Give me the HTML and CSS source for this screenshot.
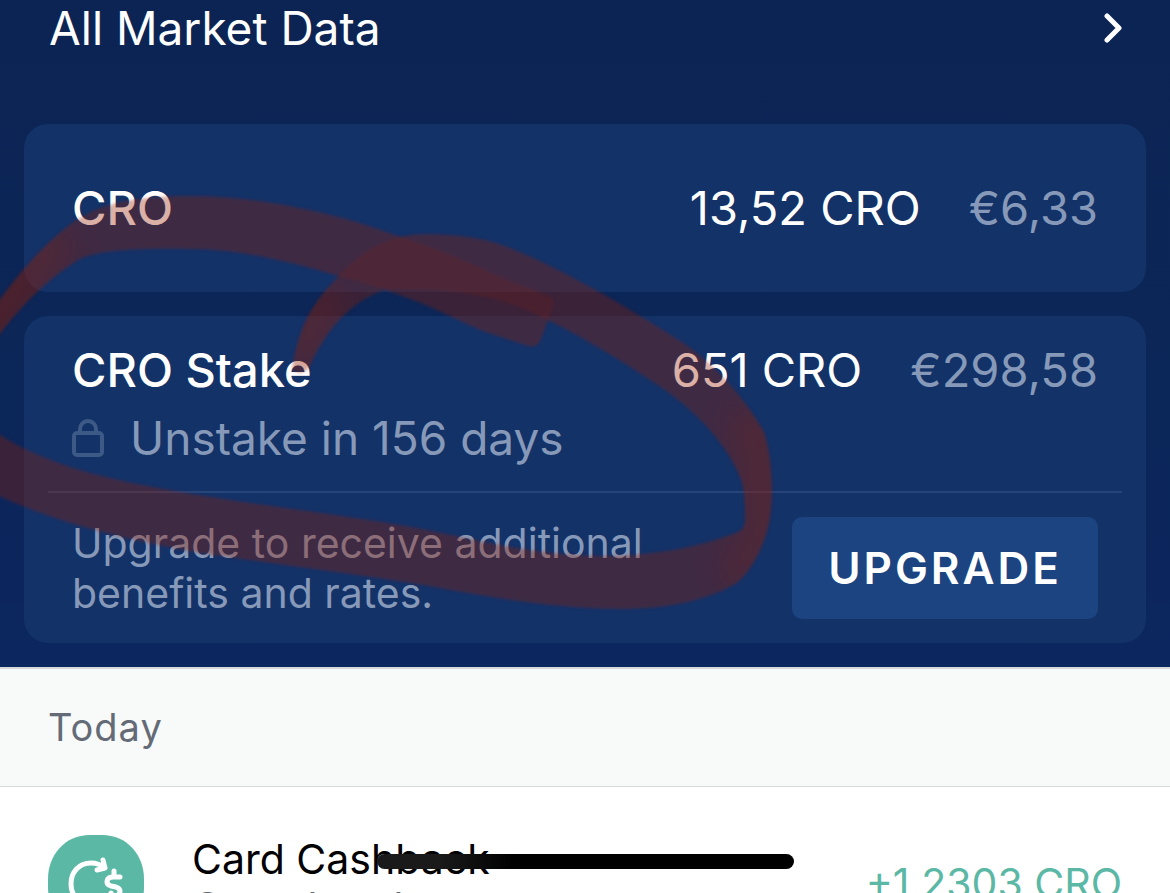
FILE: index.html
```html
<!DOCTYPE html>
<html lang="en">
<head>
  <meta charset="UTF-8">
  <meta name="viewport" content="width=device-width, initial-scale=1">
  <title>CRO Wallet</title>
  <link rel="stylesheet" href="styles.css">
</head>
<body>

<main class="screen">
  <section class="wallet">
    <a class="market-link" href="#market">
      <span>All Market Data</span>
      <svg class="chevron" viewBox="0 0 18 30" aria-hidden="true">
        <path d="M3 3L15 15L3 27"/>
      </svg>
    </a>

    <div class="card card-balance">
      <div class="row">
        <h2>CRO</h2>
        <span class="amount">13,52 CRO</span>
        <span class="fiat">€6,33</span>
      </div>
    </div>

    <div class="card card-stake">
      <div class="row">
        <h2>CRO Stake</h2>
        <span class="amount">651 CRO</span>
        <span class="fiat">€298,58</span>
      </div>
      <div class="lock-row">
        <svg class="lock" viewBox="0 0 32 38" aria-hidden="true">
          <rect x="2" y="14" width="28" height="22" rx="3"/>
          <path d="M8 14V10a8 8 0 0 1 16 0v4"/>
        </svg>
        <span>Unstake in 156 days</span>
      </div>
      <div class="upgrade">
        <p>Upgrade to receive additional<br>benefits and rates.</p>
        <button type="button">UPGRADE</button>
      </div>
    </div>

    <!-- highlighter circle around the stake -->
    <svg class="marker" viewBox="0 0 1170 667" aria-hidden="true">
      <defs>
        <filter id="soft"><feGaussianBlur stdDeviation="1.5"/></filter>
        <filter id="softer" x="-30%" y="-30%" width="160%" height="160%"><feGaussianBlur stdDeviation="14"/></filter>
        <path id="band" d="M552 298C530 288 515 283 500 277C465 260 430 246 395 235C340 214 260 196 190 196C140 196 100 201 68 226C38 250 18 275 -8 310V345C15 312 42 283 75 262C90 251 130 248 190 249C240 249 290 262 335 275C370 284 405 296 430 307L480 330L528 346C536 348 539 344 541 339L553 307C554 302 554 300 552 298Z"/>
        <path id="loop" d="M-10 428C15 446 45 460 90 473C180 497 300 508 400 525C470 537 520 554 600 556C660 556 705 545 738 532C746 529 745 521 745 510C744 495 744 486 740 477C725 440 690 405 650 380C610 353 570 330 535 314C495 294 440 287 384 290C345 304 322 338 311 364Q304 378 292 370C298 332 308 308 335 280C360 252 385 235 425 234C470 235 490 240 510 248C570 272 640 315 685 344C728 375 750 408 764 432C773 460 775 505 767 531C760 556 748 573 738 582C712 599 670 609 620 609C550 608 490 597 440 588C380 577 280 565 200 553C110 537 45 518 -10 492Z"/>
        <clipPath id="ink"><use href="#band"/><use href="#loop"/></clipPath>
        <clipPath id="bandClip"><use href="#band"/></clipPath>
      </defs>
      <g class="ink" filter="url(#soft)">
        <use href="#band"/>
        <use href="#loop"/>
      </g>
      <g class="ink-dark" filter="url(#soft)">
        <g clip-path="url(#bandClip)">
          <use href="#loop"/>
        </g>
      </g>
      <g class="ink-dark" filter="url(#soft)">
        <g clip-path="url(#ink)">
          <g filter="url(#softer)">
            <path d="M-40 290L40 225L80 240L-10 380Z"/>
            <path d="M280 370L300 300L330 280L345 306L318 360Z"/>
            <path d="M725 410L785 410V540L740 595L715 570L742 530L735 460Z"/>
          </g>
        </g>
      </g>
    </svg>
  </section>

  <h3 class="day">Today</h3>

  <section class="transaction">
    <svg class="coin" viewBox="0 0 96 96" aria-hidden="true">
      <path class="coin-bg" d="M42 0H54C79 0 96 20 96 44V52C96 78 78 96 54 96H42C18 96 0 78 0 52V44C0 20 17 0 42 0Z"/>
      <path class="coin-arrow" d="M57 33C52 29 48 28 43 28C31 28 23 37 23 49C23 61 32 70 44 70C53 70 60 65 63 58M55 25L57 33L49 35"/>
      <path class="coin-dollar" d="M66 36V42M72 42H65C58 42 57 49 63 51L68 52C74 54 73 61 66 61H59M66 61V67"/>
    </svg>
    <div class="details">
      <h4>Card Cashback</h4>
      <p>Completed</p>
    </div>
    <span class="earned">+1,2303 CRO</span>
    <span class="redaction"></span>
  </section>
</main>

</body>
</html>
```

FILE: styles.css
```css
* {
  box-sizing: border-box;
}
body {
  margin: 0;
  font-family: Inter, "Liberation Sans", sans-serif;
  font-size: 46px;
  background: #fff;
  color: #fff;
}
h2, h3, h4, p {
  margin: 0;
  font-weight: 400;
}
.screen {
  height: 100vh;
  overflow: hidden;
}
.wallet {
  position: relative;
  padding: 0 24px 24px;
  background: linear-gradient(#0c2454, #0b2657 50%, #0c265f);
}
.market-link {
  display: flex;
  align-items: center;
  justify-content: space-between;
  padding: 0 24px 0 25px;
  margin-bottom: 68px;
  line-height: 56px;
  color: #fff;
  text-decoration: none;
}
.chevron {
  width: 18px;
  height: 30px;
  fill: none;
  stroke: #fff;
  stroke-width: 5;
  stroke-linecap: round;
  stroke-linejoin: round;
}
.card {
  border-radius: 24px;
  background: #133268;
}
.card + .card {
  margin-top: 24px;
}
.card-balance {
  padding: 50px 0;
}
.card-stake {
  padding: 20px 0 24px;
}
.row {
  display: flex;
  padding: 0 48px;
  font-size: 47px;
  line-height: 68px;
}
.row h2 {
  flex: 1;
  font-size: 47px;
  font-weight: 500;
}
.fiat {
  margin-left: 48px;
  color: #8799b8;
}
.lock-row {
  display: flex;
  align-items: center;
  gap: 26px;
  padding: 0 48px;
  line-height: 68px;
  color: #8799b8;
}
.lock {
  width: 32px;
  height: 38px;
  fill: none;
  stroke: #3d5986;
  stroke-width: 4;
}
.upgrade {
  display: flex;
  align-items: center;
  justify-content: space-between;
  margin: 19px 24px 0;
  padding: 24px 24px 0;
  border-top: 2px solid #28457a;
}
.upgrade p {
  font-size: 41px;
  line-height: 50px;
  color: #8799b8;
}
.upgrade button {
  height: 102px;
  padding: 0 36px;
  border: 0;
  border-radius: 10px;
  background: #1c4481;
  color: #fff;
  font-family: inherit;
  font-size: 44px;
  font-weight: 600;
  letter-spacing: 3px;
  cursor: pointer;
}
.marker {
  position: absolute;
  top: 0;
  left: 0;
  width: 100%;
  height: 100%;
  pointer-events: none;
}
.ink {
  fill: #941a00;
  opacity: 0.34;
}
.ink-dark {
  fill: #941a00;
  opacity: 0.17;
}
.day {
  padding: 0 48px;
  border-top: 2px solid #d8d9da;
  border-bottom: 1px solid #d8d9da;
  background: #f8faf9;
  color: #646b76;
  font-size: 38px;
  line-height: 117px;
  letter-spacing: 1px;
}
.transaction {
  position: relative;
  display: flex;
  align-items: center;
  padding: 48px;
  font-size: 41px;
  line-height: 48px;
}
.coin {
  width: 96px;
  height: 96px;
  margin-right: 48px;
  fill: none;
  stroke: #fff;
  stroke-linecap: round;
  stroke-linejoin: round;
}
.coin-bg {
  fill: #5bb8a5;
  stroke: none;
}
.coin-arrow, .coin-dollar {
  stroke-width: 5;
}
.details {
  flex: 1;
  color: #000;
}
.details h4 {
  font-size: 41px;
}
.details p {
  color: #646b76;
}
.earned {
  color: #5bb8a5;
}
.redaction {
  position: absolute;
  top: 67px;
  left: 377px;
  width: 417px;
  height: 15px;
  border-radius: 8px;
  background: linear-gradient(90deg, #1a1a1a 15%, #000 33%);
}
```
